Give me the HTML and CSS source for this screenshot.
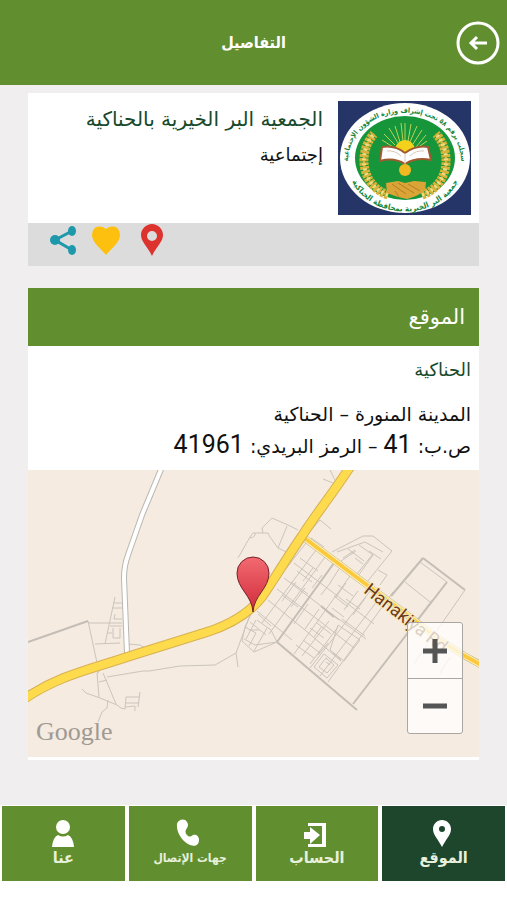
FILE: index.html
```html
<!DOCTYPE html>
<html lang="ar" dir="rtl">
<head>
    <meta charset="UTF-8">
    <meta name="viewport" content="width=device-width, initial-scale=1.0">
    <title>التفاصيل</title>
    <link rel="stylesheet" href="styles.css">
</head>
<body>
    <header class="header">
        <button class="back" type="button" aria-label="رجوع">
            <svg viewBox="0 0 44 44">
                <circle cx="22" cy="22" r="20" />
                <path d="M31 22H15M21 16l-6 6 6 6" />
            </svg>
        </button>
        <h1>التفاصيل</h1>
    </header>

    <main class="content">
        <section class="card">
            <div class="summary">
                <svg class="logo" viewBox="0 0 133 114" role="img" aria-label="شعار الجمعية">
                    <defs>
                        <path id="arc-top" d="M10 68C4 -7 129 -7 123 68" />
                        <path id="arc-bottom" d="M9 64C18 126 116 126 125 64" />
                        <g id="wheat">
                            <path d="M50 94C22 84 20 50 36 33" fill="none" stroke="#e0b840" stroke-width="2" />
                            <path d="M50 94C22 84 20 50 36 33" fill="none" stroke="#d8b238" stroke-width="9" stroke-dasharray="3 1" />
                            <path d="M50 94C22 84 20 50 36 33" fill="none" stroke="#efdc86" stroke-width="4" stroke-dasharray="2 3" />
                        </g>
                    </defs>
                    <rect width="133" height="114" fill="#263568" />
                    <ellipse cx="67" cy="57" rx="65" ry="55" fill="#fff" />
                    <ellipse cx="67" cy="57" rx="50" ry="42" fill="#16953a" />
                    <use href="#wheat" />
                    <use href="#wheat" transform="translate(134 0) scale(-1 1)" />
                    <g stroke="#b8d45a" stroke-width="1">
                        <path d="M57 44L46 33M60 42L51 27M62 41L57 25M65 40L63 22M67 40V22M70 40L73 23M72 41L79 25M75 43L84 29M78 46L88 34M55 46L44 39M79 47L89 40" />
                    </g>
                    <circle cx="67" cy="49" r="10" fill="#f4d21c" />
                    <path d="M44 46Q57 44 67 52Q78 44 90 46L93 59Q78 56 67 63Q56 56 42 60Z" fill="#fff" stroke="#a05a30" stroke-width="2" />
                    <path d="M67 52V63M49 50q8-1 14 5M86 50q-8-1-14 5" fill="none" stroke="#d8c8b8" />
                    <circle cx="67" cy="69" r="6" fill="#f2b820" />
                    <path d="M48 82L60 80L67 82L76 80L88 81L87 90L78 95L69 98L60 96L49 92Z" fill="#dba436" />
                    <path d="M54 83L68 93M60 82L76 92M70 83L82 90M61 96L57 90" stroke="#b47d24" fill="none" />
                    <text class="logo-top"><textPath href="#arc-top" startOffset="50%">سجلت برقم ٥٨ تحت إشراف وزارة الشؤون الإجتماعية</textPath></text>
                    <text class="logo-bottom"><textPath href="#arc-bottom" startOffset="50%">جمعية البر الخيرية بمحافظة الحناكية</textPath></text>
                </svg>
                <div>
                    <h2>الجمعية البر الخيرية بالحناكية</h2>
                    <p>إجتماعية</p>
                </div>
            </div>
            <div class="actions">
                <button type="button" aria-label="الموقع على الخريطة">
                    <svg class="icon-pin" viewBox="0 0 22 32">
                        <path fill="#dc332f" fill-rule="evenodd" d="M11 0C5 0 0 5 0 11C0 18 7 23 11 32C15 23 22 18 22 11C22 5 17 0 11 0ZM11 7a5 5 0 1 1 0 10a5 5 0 1 1 0-10Z" />
                    </svg>
                </button>
                <button type="button" aria-label="المفضلة">
                    <svg class="icon-heart" viewBox="0 0 28 29">
                        <path fill="#fec00f" d="M14 3C11 0 7 0 4 1C1 3 0 6 0 10C1 17 8 22 14 29C20 22 27 17 28 10C28 6 27 3 24 1C21 0 17 0 14 3Z" />
                    </svg>
                </button>
                <button type="button" aria-label="مشاركة">
                    <svg class="icon-share" viewBox="0 0 26 29">
                        <path fill="none" stroke="#1d99ab" stroke-width="3" d="M22 5L5 14L22 24" />
                        <g fill="#1d99ab">
                            <ellipse cx="22" cy="5" rx="4" ry="5" />
                            <circle cx="5" cy="14" r="5" />
                            <ellipse cx="22" cy="24" rx="4" ry="5" />
                        </g>
                    </svg>
                </button>
            </div>
        </section>

        <section class="card location">
            <h2>الموقع</h2>
            <div class="address">
                <h3>الحناكية</h3>
                <p>المدينة المنورة – الحناكية</p>
                <p>ص.ب: <span class="number">41</span> – الرمز البريدي: <span class="number">41961</span></p>
            </div>
            <div class="map">
                <svg class="map-canvas" viewBox="0 0 451 287" role="img" aria-label="خريطة الحناكية">
                    <defs>
                        <linearGradient id="marker-fill" x1="0" y1="0" x2="0" y2="1">
                            <stop offset="0" stop-color="#f36a70" />
                            <stop offset="1" stop-color="#cf2b3b" />
                        </linearGradient>
                        <path id="main-road" d="M-4 229C30 206 60 200 99 187L179 162C204 154 222 142 234 127C249 105 262 83 274 66C285 48 303 26 322 -3" />
                        <path id="side-road" d="M275 67L339 115L382 147L412 170L435 185L455 196" />
                        <path id="white-road" d="M134 -3L114 45L100 85Q96 96 96 108L99 183" />
                    </defs>
                    <rect width="451" height="287" fill="#f5ebe0" />

                    <!-- small streets -->
                    <g class="street">
                        <path d="M0 172L60 151L71 202L69 203L71 227M60 153H94M67 174L92 173M75 203L88 234M71 212L79 210" />
                        <path d="M87 127L77 174M85 133H94M84 138H94M82 156H94M87 144l-1 5h8M85 158v10h7v-10M80 163H84" />
                        <path d="M100 174L112 175L117 178M79 207L115 201H121L152 196L187 195L208 183L222 145M208 183L210 197" />
                        <path d="M54 219L58 223L72 228L89 235L93 238L97 239L98 227H111M112 222L110 237M98 233H111M98 237L107 236V241M80 230L79 238L74 242L70 252" />
                        <path d="M210 88L222 67L225 63H240L242 67L250 78L265 85M270 60L260 55L244 48L234 58L235 63M250 78L259 56M222 68q6-1 5-5" />
                        <path d="M279 65L292 50L303 59M283 68L296 77M302 0L308 12M295 9L305 13" />
                        <path d="M304 82L335 66H345L364 81L339 112M309 82L337 72L355 82M331 75L345 85L330 106M327 88L335 94M320 79L336 91M350 100L359 105L352 115M315 88L327 80M341 81L353 89M345 84L328 105M313 91L328 81" />
                    </g>

                    <!-- town blocks -->
                    <g class="street">
                        <path d="M278 73L224 142M288 80L234 153M297 87L241 164M322 106L266 184M343 120L282 198M353 126L292 206M365 122L300 212" />
                        <path d="M256 108L293 136L338 169M249 119L289 149L326 178M240 130L277 160L313 191M229 141L264 170M266 93L303 121L346 154" />
                        <path d="M268 112L254 131M277 118L263 137M285 98L275 111M294 105L284 118M303 112L293 125M311 99L302 113M318 113L308 127M330 121L316 140M338 127L325 145" />
                        <path d="M272 88L290 101M269 101L284 112M263 112L280 124M254 125L270 137M310 115L325 126M306 126L320 137M304 138L316 147M318 129L332 139M297 140L311 150M289 153L303 164M282 158L296 168M275 170L292 183M268 175L286 188" />
                        <path d="M280 134L266 154M291 139L277 159M301 151L274 186M310 157L282 194M310 155L332 170L316 191L302 180ZM314 149L337 166M296 184L310 195L299 208L286 197ZM298 188L306 195L299 203L291 197ZM298 192L302 195M305 183L313 190M294 156L286 167M300 173L290 185" />
                        <path d="M224 142L217 157L214 171L226 182L249 172L243 160L229 150M217 157L228 163L221 176M228 150L218 169M239 158L226 181M216 169L227 175L249 172M222 152L238 165M221 160H231M230 144L243 156" />
                    </g>
                    <g class="street wide">
                        <path d="M0 172L60 151" />
                        <path d="M249 172L329 240M325 234L419 112M306 93L249 172M395 88L437 120M395 88L363 126M293 136L306 147" />
                    </g>
                    <path class="street" d="M377 112L402 132M392 92L419 112M437 120L385 195M404 130L378 164M422 187L412 203" />

                    <!-- roads -->
                    <use href="#white-road" stroke="#b9b7b1" stroke-width="6" fill="none" />
                    <use href="#white-road" stroke="#fff" stroke-width="4" fill="none" />
                    <use href="#side-road" stroke="#b8aa7c" stroke-width="7" fill="none" />
                    <use href="#side-road" stroke="#fff2bd" stroke-width="6" fill="none" />
                    <use href="#side-road" stroke="#fcc93c" stroke-width="4" fill="none" />
                    <use href="#main-road" stroke="#d7b153" stroke-width="10" fill="none" />
                    <use href="#main-road" stroke="#fddb4d" stroke-width="8" fill="none" />

                    <text class="road-name" transform="translate(335 122) rotate(38)">Hanakiya Rd</text>
                    <path d="M225 142C224 125 209 119 209 103A16 16 0 0 1 241 103C241 119 226 125 225 142Z" fill="url(#marker-fill)" stroke="#78202c" />
                    <text class="google" x="8" y="270">Google</text>
                </svg>
                <div class="zoom">
                    <button type="button" aria-label="تكبير"><svg viewBox="0 0 24 24"><path d="M0 12H24M12 0V24" /></svg></button>
                    <button type="button" aria-label="تصغير"><svg viewBox="0 0 24 24"><path d="M0 12H24" /></svg></button>
                </div>
            </div>
        </section>
    </main>

    <nav class="tabs">
        <a class="active" href="#location">
            <svg viewBox="0 0 28 28"><path fill-rule="evenodd" d="M12 1C7 1 3 5 3 10C3 16 8 20 12 28C16 20 21 16 21 10C21 5 17 1 12 1ZM12 7a3 3 0 1 1 0 6a3 3 0 1 1 0-6Z" /></svg>
            <span>الموقع</span>
        </a>
        <a href="#account">
            <svg viewBox="0 0 28 28"><path d="M5 4H23V28H5V25H19V7H5ZM1 13H7V8L17 16L7 25V20H1Z" /></svg>
            <span>الحساب</span>
        </a>
        <a class="long" href="#contacts">
            <svg viewBox="0 0 28 28"><path d="M1 5C2 0 9 -1 11 3Q13 6 11 9C9 12 9 14 11 16C13 18 14 18 17 16C20 15 23 17 23 21C23 26 19 28 14 26C7 23 0 14 1 5Z" /></svg>
            <span>جهات الإتصال</span>
        </a>
        <a href="#about">
            <svg viewBox="0 0 28 28"><circle cx="14" cy="8" r="7" /><path d="M3 28Q4 18 9 16Q14 19 19 16Q24 18 25 28Z" /></svg>
            <span>عنا</span>
        </a>
    </nav>
</body>
</html>
```
FILE: styles.css
```css
* {
    box-sizing: border-box;
}

body {
    font-family: 'DejaVu Sans', sans-serif;
    margin: 0;
    background: #fff;
    color: #111;
}

h1,
h2,
h3,
p {
    margin: 0;
    font-weight: 400;
}

button {
    border: none;
    padding: 0;
    background: none;
    cursor: pointer;
}

svg {
    display: block;
}

.header {
    display: grid;
    grid-template-columns: 44px 1fr 44px;
    align-items: center;
    height: 85px;
    padding: 0 7px;
    background: #618f30;
    color: #fff;
}

.header h1 {
    font-family: 'DejaVu Sans Condensed', 'DejaVu Sans', sans-serif;
    font-size: 16px;
    font-weight: 700;
    text-align: center;
}

.back svg {
    width: 44px;
    height: 44px;
    fill: none;
    stroke: #fff;
    stroke-width: 3;
}

.content {
    padding: 8px 28px 45px;
    background: #f0eeef;
}

.card {
    background: #fff;
}

.summary {
    display: flex;
    gap: 15px;
    padding: 8px;
}

.logo {
    flex: none;
    width: 133px;
    height: 114px;
}

.logo text {
    font-family: 'DejaVu Sans Condensed', 'DejaVu Sans', sans-serif;
    font-weight: 700;
    fill: #16853a;
    text-anchor: middle;
}

.logo-top {
    font-size: 7px;
}

.logo-bottom {
    font-size: 8px;
}

.summary h2 {
    font-size: 20px;
    line-height: 36px;
    color: #174a2c;
}

.summary p {
    font-size: 18px;
    line-height: 36px;
}

.actions {
    display: flex;
    justify-content: flex-end;
    align-items: flex-start;
    height: 43px;
    padding: 1px 22px;
    background: #dcdcdc;
}

.actions button {
    display: flex;
    align-items: center;
    height: 32px;
}

.icon-pin {
    width: 22px;
    height: 32px;
    margin-left: 21px;
}

.icon-heart {
    width: 28px;
    height: 29px;
    margin-left: 16px;
}

.icon-share {
    width: 26px;
    height: 29px;
}

.location {
    margin-top: 22px;
    padding-bottom: 3px;
}

.location h2 {
    padding: 0 14px;
    background: #618f30;
    color: #fff;
    font-size: 21px;
    line-height: 58px;
}

.address {
    padding: 8px;
    font-size: 19px;
    line-height: 32px;
}

.address h3 {
    margin-bottom: 12px;
    font-size: 18px;
    line-height: 32px;
    color: #174a2c;
}

.number {
    font-family: Roboto, sans-serif;
    font-size: 25px;
    line-height: 24px;
}

.map {
    position: relative;
}

.map-canvas {
    width: 100%;
    direction: ltr;
}

.street {
    fill: none;
    stroke: #cbc5bd;
    stroke-width: 1;
}

.wide {
    stroke: #c4beb7;
    stroke-width: 2;
}

.road-name {
    font-family: Roboto, sans-serif;
    font-size: 18px;
    fill: #6b3a1e;
    stroke: #fbe9b8;
    stroke-width: 2;
    paint-order: stroke;
}

.google {
    font-family: 'Liberation Serif', serif;
    font-size: 26px;
    fill: #a09a94;
}

.zoom {
    position: absolute;
    right: 16px;
    bottom: 23px;
    width: 56px;
    border: 1px solid #aaa7a2;
    border-radius: 3px;
    background: rgba(255, 255, 255, 0.75);
}

.zoom button {
    display: flex;
    justify-content: center;
    align-items: center;
    width: 100%;
    height: 55px;
}

.zoom button + button {
    border-top: 1px solid #aaa7a2;
}

.zoom svg {
    width: 24px;
    height: 24px;
    stroke: #555;
    stroke-width: 5;
}

.tabs {
    display: grid;
    grid-template-columns: repeat(4, 1fr);
    gap: 4px;
    padding: 1px 2px;
    background: #fff;
}

.tabs a {
    display: flex;
    flex-direction: column;
    align-items: center;
    height: 75px;
    padding-top: 13px;
    background: #618f30;
    color: #e6f0dc;
    font-family: 'DejaVu Sans Condensed', 'DejaVu Sans', sans-serif;
    font-size: 16px;
    font-weight: 700;
    line-height: 22px;
    text-decoration: none;
}

.tabs .active {
    background: #1d462d;
}

.tabs .long {
    font-size: 12px;
}

.tabs svg {
    width: 28px;
    height: 28px;
    fill: #fff;
}
```
